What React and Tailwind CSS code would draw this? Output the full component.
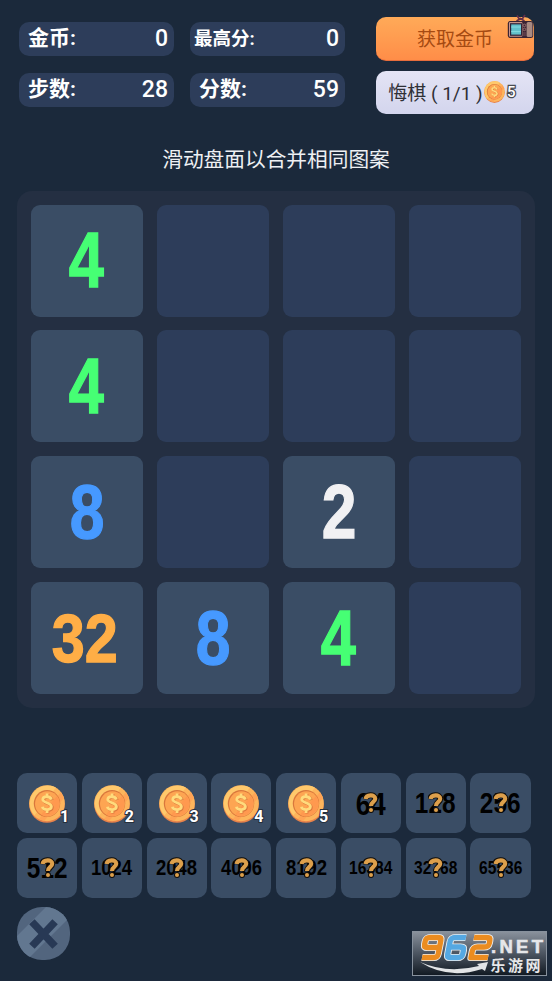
import React from "react";

const CJK = "font-['Roboto','Noto_Sans_CJK_SC',sans-serif]";

function Coin({ className }) {
  return (
    <svg viewBox="0 0 36 38" className={className}>
      <ellipse cx="18" cy="19.6" rx="17.8" ry="18.2" fill="#e8824a" />
      <ellipse cx="18" cy="18.2" rx="17.8" ry="18" fill="#fdb55c" />
      <path d="M5.4 30.500A17.8 18 0 0 1 27 2.600Z" fill="#ffc96c" />
      <path d="M32 7L35 13L15 36L10 34Z" fill="#ffa455" />
      <ellipse cx="18" cy="18.4" rx="13.2" ry="13.4" fill="#d9773c" />
      <ellipse cx="18.4" cy="18.8" rx="12.4" ry="12.6" fill="#fda552" />
      <path d="M28 11A12.4 12.6 0 0 1 12 29.500Z" fill="#ff994f" />
      <g fill="none" strokeLinecap="butt">
        <path d="M23.2 15.2C22.3 11.4 14.600 11.400 14.600 15.2C14.600 19 23.2 17.8 23.2 22.2C23.2 26.2 15 26.2 14.200 22.4M18.9 9V12M18.9 25.500V28.500" stroke="#d9773c" strokeWidth="3" />
        <path d="M22.4 14.6C21.5 10.800 13.8 10.800 13.8 14.6C13.8 18.4 22.4 17.2 22.4 21.6C22.4 25.6 14.2 25.6 13.4 21.8M18.1 8.400V11.4M18.1 25V28" stroke="#ffdb7c" strokeWidth="2.8" />
      </g>
    </svg>
  );
}

function Television({ className }) {
  return (
    <svg viewBox="0 0 27 26" className={className}>
      <path d="M10 1.500L13 6M18 1L14.500 6M9.500 7L13.500 4.600L17.500 7" fill="none" stroke="#642f49" strokeWidth="1.7" />
      <rect x="0.8" y="7" width="25.400" height="17" rx="2.500" fill="#3a2433" />
      <rect x="19.600" y="8" width="5.800" height="15" rx="1.500" fill="#a78a82" />
      <rect x="2" y="8" width="13.4" height="14.8" rx="1" fill="#c79389" />
      <rect x="3" y="9.2" width="12" height="12.6" fill="#302338" />
      <rect x="4.2" y="10.4" width="9.8" height="10.2" fill="#62c0cb" />
      <path d="M4.2 13H14M4.2 17.6H14" stroke="#85dbdf" strokeWidth="1" />
      <circle cx="17.4" cy="11.4" r="1.3" fill="none" stroke="#a87878" strokeWidth="0.8" />
      <circle cx="17.4" cy="15.4" r="1.3" fill="none" stroke="#a87878" strokeWidth="0.8" />
      <path d="M16.1 19H18.8M16.1 21H18.8" stroke="#8d6168" strokeWidth="0.8" />
    </svg>
  );
}

function Stat({ label, value, small }) {
  return (
    <div className="flex h-[34px] items-center justify-between rounded-[10px] bg-[#2d3d5a] pr-[6px] text-white">
      <span className={small ? "pt-[2px] pl-[4px] text-[18.5px] font-bold" : "pl-[9px] text-[21px] font-bold"}>{label}</span>
      <span className="pt-[2px] text-[23px] font-medium">{value}</span>
    </div>
  );
}

const board = [4, 0, 0, 0, 4, 0, 0, 0, 8, 0, 2, 0, 32, 8, 4, 0];
const tones = {
  2: "text-[#f1f1f3] text-[76px] scale-x-[0.82]",
  4: "text-[#46ff74] text-[77px] scale-x-[0.82]",
  8: "text-[#4699ff] text-[76px] scale-x-[0.82]",
  32: "text-[#ffae46] text-[69px] scale-x-[0.86] pr-[4px]",
};

function Tile({ value }) {
  if (!value) return <div className="h-[112px] rounded-[9px] bg-[#2d3d5a]" />;
  return (
    <div className="flex h-[112px] items-center justify-center rounded-[9px] bg-[#3a4d65]">
      <span className={`inline-block font-['Liberation_Sans',sans-serif] leading-none font-bold [-webkit-text-stroke:1.300px_currentColor] ${tones[value]}`}>
        {value}
      </span>
    </div>
  );
}

const goals = ["64", "128", "256", "512", "1024", "2048", "4096", "8192", "16384", "32768", "65536"];
const goalSize = { 2: "text-[32px]", 3: "text-[29px]", 4: "text-[22px]", 5: "text-[18.5px]" };

function CoinSlot({ count }) {
  return (
    <div className="relative h-[60px] rounded-[10px] bg-[#3a4d65] pt-[12px] pl-[12px]">
      <Coin className="h-[38px] w-[36px]" />
      <span className="absolute top-[35px] left-[43px] font-['Roboto',sans-serif] text-[16px] leading-[18px] font-bold text-white [paint-order:stroke] [-webkit-text-stroke:2px_#26303c]">
        {count}
      </span>
    </div>
  );
}

function GoalSlot({ value }) {
  return (
    <div className="relative flex h-[60px] items-center justify-center rounded-[10px] bg-[#3a4d65]">
      <span className={`inline-block scale-x-[0.84] pt-px font-['Liberation_Sans',sans-serif] leading-none font-bold text-black ${goalSize[value.length]}`}>
        {value}
      </span>
      <svg viewBox="0 0 16 22" className="absolute top-[19px] left-[22.500px] h-[22px] w-[16px]">
        <g fill="none" strokeLinejoin="round">
          <path d="M2 7.200C2.400 2.200 12.200 1.600 12.200 6.800C12.200 10.200 8 9.800 8 14.600" stroke="#110e0b" strokeWidth="6" />
          <circle cx="8" cy="18" r="3" fill="#110e0b" />
          <path d="M2.500 7C3.200 2.400 12.200 1.900 12.200 6.800C12.200 10.200 8 9.800 8 14" stroke="#dda04c" strokeWidth="4.100" />
        </g>
        <circle cx="8" cy="17.900" r="2" fill="#dda04c" />
      </svg>
    </div>
  );
}

const nine = "M28 15.500H18Q14 15.500 14 12V9Q14 5.500 18 5.500H26Q29.500 5.500 29.500 9V22Q29.500 25.500 26 25.500H14";
const six = "M54 5.500H43Q39 5.500 39 9.500V22Q39 25.500 42.500 25.500H50Q54 25.500 54 22V18.500Q54 15 50 15H40";
const two = "M62 5.500H74.500Q78.500 5.500 78.500 9V11.500Q78.500 15 74.500 15H67Q63 15 63 19V25.500H80";

function Watermark() {
  return (
    <svg viewBox="0 0 135 45" className="h-[45px] w-[135px]">
      <defs>
        <linearGradient id="plate" x1="0" y1="0" x2="0" y2="1">
          <stop offset="0" stopColor="#8a929d" />
          <stop offset="0.5" stopColor="#4c5561" />
          <stop offset="1" stopColor="#111922" />
        </linearGradient>
      </defs>
      <rect x="0.5" y="0.5" width="134" height="44" fill="url(#plate)" stroke="#87919d" />
      <g fill="none" strokeLinejoin="round" transform="translate(1 1) skewX(-11)">
        <g stroke="#eef0f1" strokeWidth="7.200">
          <path d={nine} />
          <path d={six} />
          <path d={two} />
        </g>
        <g strokeWidth="5.400">
          <path stroke="#eb8c20" d={nine} />
          <path stroke="#55a8e2" d={six} />
          <path stroke="#eb8c20" d={two} />
        </g>
      </g>
      <path d="M8 31Q35 43 67 35L65 33L76 31L73 40L70 38Q36 49 8 31Z" fill="#e2e4e6" />
      <text x="79" y="22" textLength="52" lengthAdjust="spacing" fill="#e6e7e9" stroke="#e6e7e9" strokeWidth="0.6" className="font-['Liberation_Sans',sans-serif] text-[18.5px] font-bold">.NET</text>
      <text x="78.500" y="39.500" textLength="50" lengthAdjust="spacing" fill="#e6e7e9" className="font-['Noto_Sans_CJK_SC',sans-serif] text-[15px] leading-none font-bold">乐游网</text>
    </svg>
  );
}

export default function App() {
  return (
    <div className={`flex h-[981px] w-[552px] flex-col overflow-hidden bg-[#1b293b] ${CJK}`}>
      <header className="flex pt-[17px] pl-[19px]">
        <div className="grid grid-cols-[155px_155px] content-start gap-x-[16px] gap-y-[17px] pt-[4.500px]">
          <Stat label="金币:" value="0" />
          <Stat label="最高分:" value="0" small />
          <Stat label="步数:" value="28" />
          <Stat label="分数:" value="59" />
        </div>
        <div className="ml-[31px] flex w-[158px] flex-col gap-[10px]">
          <button className="relative flex h-[43.500px] items-center justify-center rounded-[10px] border-b border-[#e86d3c] bg-linear-to-b from-[#ffaa58] to-[#ff8d48] pt-[3px] text-[19px] text-[#a54a12]">
            获取金币
            <Television className="absolute -top-[3px] left-[130.500px] h-[26px] w-[27px]" />
          </button>
          <button className="flex h-[43.500px] items-center rounded-[10px] bg-linear-to-b from-[#e4e4f5] to-[#d3d5ed] pl-[11px] text-[#2f3036]">
            <span className="w-[97px] pt-[3px] text-[19px] whitespace-pre">悔棋 ( 1/1 )</span>
            <Coin className="h-[22px] w-[21px]" />
            <span className="ml-[2px] text-[15px] font-medium text-white [paint-order:stroke] [-webkit-text-stroke:2.500px_#4a4c52]">5</span>
          </button>
        </div>
      </header>

      <p className="mt-[32px] h-[45px] text-center text-[20.700px] leading-[29px] text-[#eef0f3]">滑动盘面以合并相同图案</p>

      <main className="ml-[17px] grid h-[517px] w-[517.500px] grid-cols-4 content-start gap-[13.900px] rounded-[15px] bg-[#242f42] p-[13.600px]">
        {board.map((value, i) => (
          <Tile key={i} value={value} />
        ))}
      </main>

      <section className="mt-[65px] ml-[17px] grid w-[513.500px] grid-cols-8 gap-[4.600px]">
        {[1, 2, 3, 4, 5].map((n) => (
          <CoinSlot key={n} count={n} />
        ))}
        {goals.map((g) => (
          <GoalSlot key={g} value={g} />
        ))}
      </section>

      <footer className="mt-[9px] flex items-start justify-between pr-[5px] pl-[17px]">
        <button className="h-[53px] w-[53px]">
          <svg viewBox="0 0 53 53" className="h-[53px] w-[53px]">
            <defs>
              <clipPath id="disc"><rect width="53" height="53" rx="25" /></clipPath>
            </defs>
            <g clipPath="url(#disc)">
              <rect width="53" height="53" fill="#52657e" />
              <path d="M0 29L29 0H53V10L10 53H0Z" fill="#627790" />
            </g>
            <path d="M17.500 17.500L35.500 36.500M35.500 17.500L17.500 36.500" stroke="#283955" strokeWidth="7.500" strokeLinecap="square" />
          </svg>
        </button>
        <div className="pt-[24px]">
          <Watermark />
        </div>
      </footer>
    </div>
  );
}
